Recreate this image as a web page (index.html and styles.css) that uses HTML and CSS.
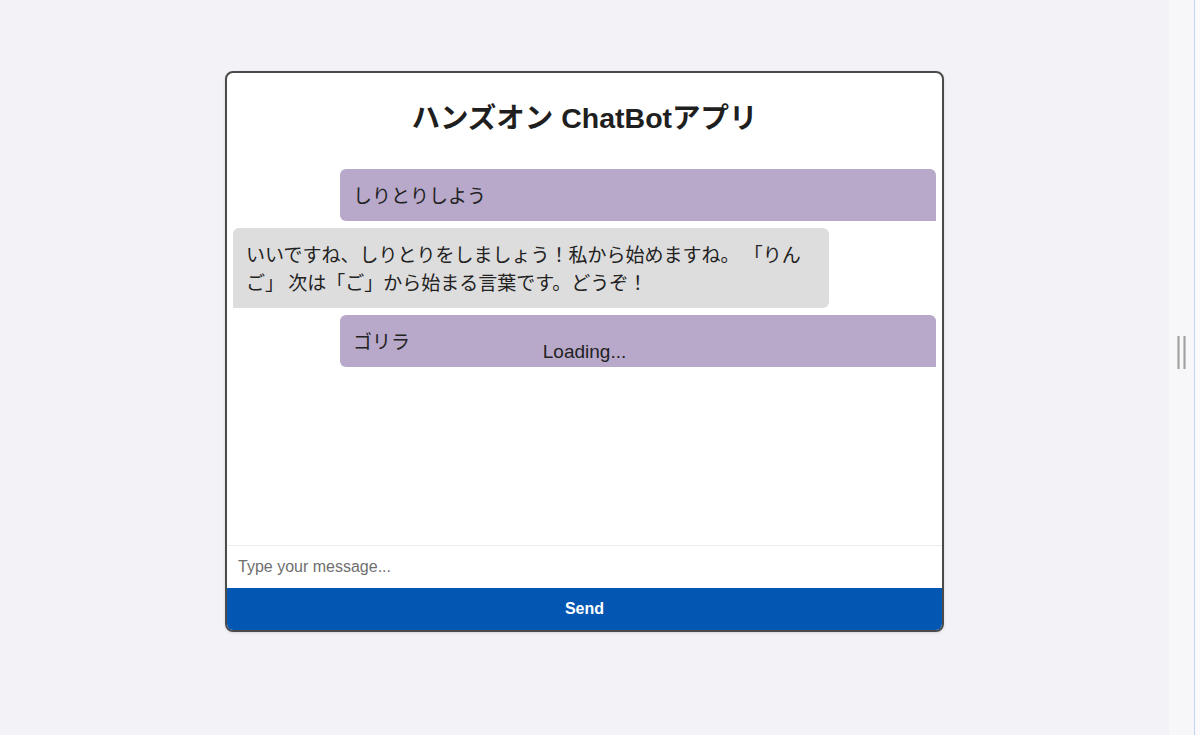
FILE: index.html
```html
<!DOCTYPE html>
<html lang="ja">
<head>
<meta charset="utf-8">
<title>ハンズオン ChatBotアプリ</title>
<link rel="stylesheet" href="styles.css">
</head>
<body>
<div class="layout">
  <main class="page">
    <section class="chat">
      <header class="chat-header">
        <h1 class="chat-title">ハンズオン ChatBotアプリ</h1>
      </header>
      <div class="messages">
        <div class="msg msg-user">しりとりしよう</div>
        <div class="msg msg-bot">いいですね、しりとりをしましょう！私から始めますね。 「りんご」 次は「ご」から始まる言葉です。どうぞ！</div>
        <div class="msg msg-user">ゴリラ</div>
        <div class="loading">Loading...</div>
      </div>
      <form class="composer">
        <input class="composer-input" type="text" placeholder="Type your message...">
        <button class="composer-send" type="button">Send</button>
      </form>
    </section>
  </main>
  <aside class="side">
    <div class="side-panel">
      <div class="grip"><span class="grip-bar"></span><span class="grip-bar"></span></div>
    </div>
    <div class="side-edge"></div>
  </aside>
</div>
</body>
</html>
```
FILE: styles.css
```css
* { box-sizing: border-box; }
html, body {
  margin: 0;
  padding: 0;
  height: 100%;
}
body {
  background: #f2f2f7;
  font-family: "Liberation Sans", Arial, "Noto Sans CJK JP", sans-serif;
  color: #222;
  overflow: hidden;
}
.layout {
  display: flex;
  height: 735px;
}
.page {
  flex: 1;
  display: flex;
  justify-content: center;
  align-items: flex-start;
  padding-top: 71px;
}
.chat {
  width: 719px;
  height: 561px;
  background: #fff;
  border: 2px solid #4b4b4b;
  border-radius: 8px;
  box-shadow: 0 1px 3px rgba(0,0,0,0.12);
  display: flex;
  flex-direction: column;
  overflow: hidden;
}
.chat-header {
  padding: 27px 0 27px;
}
.chat-title {
  margin: 0;
  text-align: center;
  font-size: 28.5px;
  line-height: 36px;
  font-weight: bold;
  color: #1f1f1f;
  font-family: "Liberation Sans", Arial, "Noto Sans CJK JP", sans-serif;
}
.messages {
  flex: 1;
  display: flex;
  flex-direction: column;
  gap: 7px;
  padding: 6px;
  overflow: hidden;
}
.msg {
  width: 596px;
  padding: 12px 13px;
  font-size: 19px;
  line-height: 28px;
  font-family: "Noto Sans CJK JP", "Liberation Sans", sans-serif;
  color: #222;
}
.msg-user {
  align-self: flex-end;
  background: #b8a9ca;
  border-radius: 6px 6px 0 6px;
}
.msg-bot {
  align-self: flex-start;
  background: #dddddd;
  border-radius: 6px 6px 6px 0;
}
.loading {
  margin-top: -36px;
  text-align: center;
  font-size: 19px;
  line-height: 28px;
  color: #222;
}
.composer {
  margin: 0;
  display: flex;
  flex-direction: column;
  border-top: 1px solid #ececf0;
}
.composer-input {
  height: 42px;
  border: none;
  outline: none;
  padding: 0 11px;
  font-size: 16px;
  font-family: "Liberation Sans", Arial, sans-serif;
  color: #222;
  background: #fff;
}
.composer-input::placeholder {
  color: #6f6f6f;
}
.composer-send {
  height: 42px;
  border: none;
  background: #0456b3;
  color: #fff;
  font-size: 16px;
  font-weight: bold;
  font-family: "Liberation Sans", Arial, sans-serif;
}
.side {
  width: 31px;
  display: flex;
}
.side-panel {
  flex: 1;
  background: #f7f7fa;
  display: flex;
  align-items: center;
  justify-content: center;
}
.grip {
  display: flex;
  gap: 3px;
  margin-bottom: 31px;
}
.grip-bar {
  width: 3px;
  height: 33px;
  background: #a0a0a0;
  border-left: 1px solid #c6c6c6;
  border-right: 1px solid #c6c6c6;
}
.side-edge {
  width: 6px;
  border-left: 1px solid #c3d5f5;
  background: #fbfbfd;
}
```
